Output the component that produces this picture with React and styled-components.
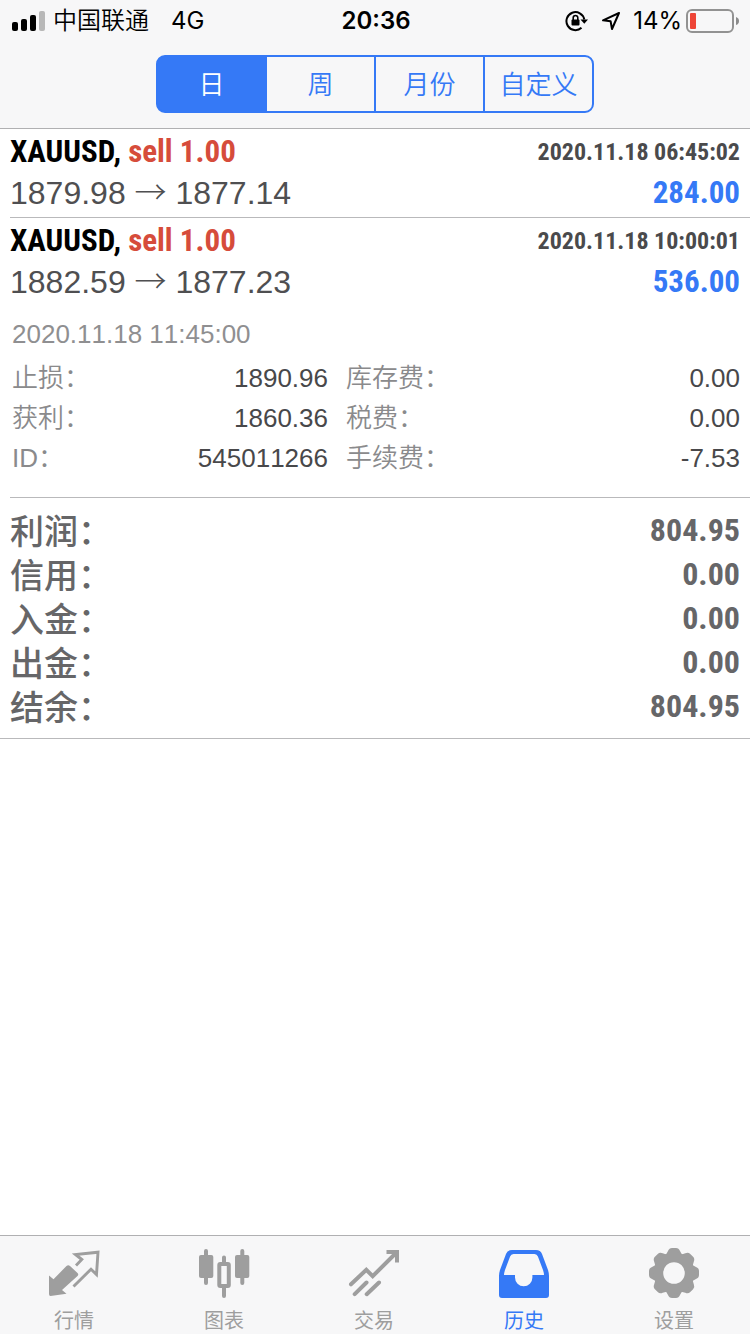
import React, { useState } from "react";
import styled, { createGlobalStyle } from "styled-components";

const blue = "#3579f6";
const gray = "#9e9e9e";
const line = "#b9b9bb";
const bar = "#f7f7f8";
const light = `"Liberation Sans", "Noto Sans CJK SC", sans-serif`;
const narrow = `"Roboto Condensed", "Liberation Sans", "Noto Sans CJK SC", sans-serif`;
const system = `Inter, "Noto Sans CJK SC", sans-serif`;

const GlobalStyle = createGlobalStyle`
  *, *::before, *::after { box-sizing: border-box; }
  body { margin: 0; background: #fff; }
`;

const Screen = styled.div`
  display: flex;
  flex-direction: column;
  min-height: 100vh;
  font-family: ${light};
`;

const Header = styled.header`
  background: ${bar};
  border-bottom: 1px solid #b0b0b2;
  padding-bottom: 15px;
`;

const StatusBar = styled.div`
  display: grid;
  grid-template-columns: 1fr auto 1fr;
  align-items: center;
  height: 40px;
  padding: 1px 10px 0 12px;
  font: 400 24px/40px ${system};
  color: #000;
`;

const StatusGroup = styled.div`
  display: flex;
  align-items: center;
  justify-content: ${(p) => (p.$end ? "flex-end" : "flex-start")};
  gap: 8px;
`;

const Carrier = styled.span`
  font-weight: 350;
  margin-right: 14px;
`;

const Percent = styled.span`
  margin: 0 -4px 0 4px;
`;

const LockIcon = styled.svg`
  margin-right: 4px;
`;

const Clock = styled.time`
  font-weight: 600;
`;

const Segments = styled.div`
  display: grid;
  grid-template-columns: repeat(4, 1fr);
  gap: 2px;
  width: 438px;
  max-width: 100%;
  height: 58px;
  margin: 15px auto 0;
  border: 2px solid ${blue};
  border-radius: 9px;
  background: ${blue};
  overflow: hidden;
`;

const Segment = styled.button`
  border: 0;
  padding: 2px 0 0;
  background: ${(p) => (p.$active ? blue : bar)};
  color: ${(p) => (p.$active ? "#fff" : blue)};
  font: 350 26px/52px ${light};
  cursor: pointer;
`;

const Content = styled.main`
  flex: 1;
`;

const Deal = styled.article`
  margin-left: 10px;
  padding: 1px 10px ${(p) => (p.$open ? "19px" : "5px")} 0;
  border-bottom: 1px solid ${line};
`;

const Line = styled.div`
  display: flex;
  justify-content: space-between;
  align-items: center;
  height: ${(p) => (p.$title ? "44px" : "38px")};
  white-space: nowrap;
`;

const Symbol = styled.h2`
  margin: 0;
  font: 700 31px/44px ${narrow};
  color: #000;
`;

const Side = styled.span`
  color: #d64c3b;
`;

const Stamp = styled.time`
  font: 700 24px/44px ${narrow};
  color: #4a4a4c;
`;

const Prices = styled.span`
  font: 400 32px/38px ${light};
  font-kerning: none;
  color: #4f4f51;
`;

const Arrow = styled.span`
  font-family: "Noto Sans CJK SC", sans-serif;
  font-weight: 300;
  line-height: 0;
`;

const Profit = styled.span`
  font: 700 31px/38px ${narrow};
  color: ${blue};
`;

const Opened = styled.time`
  display: block;
  margin: 13px 0 4px 2px;
  font: 400 26px/40px ${light};
  font-kerning: none;
  color: #8f8f91;
`;

const Details = styled.dl`
  display: grid;
  grid-template-columns: 316fr 394fr;
  column-gap: 18px;
  margin: 0 0 0 2px;
`;

const Detail = styled.div`
  display: flex;
  justify-content: space-between;
  font: 350 26px/40px ${light};
  font-kerning: none;
`;

const Term = styled.dt`
  color: #8a8a8c;
`;

const Value = styled.dd`
  margin: 0;
  color: #48484a;
`;

const Summary = styled.dl`
  margin: 0;
  padding: 10px;
  border-bottom: 1px solid ${line};
`;

const Total = styled.div`
  display: flex;
  justify-content: space-between;
  font: 500 34px/44px "Noto Sans CJK SC", sans-serif;
  color: #666668;
`;

const Sum = styled.dd`
  margin: 0;
  font: 700 32px/44px ${narrow};
`;

const TabBar = styled.nav`
  display: grid;
  grid-template-columns: repeat(5, 1fr);
  height: 99px;
  background: ${bar};
  border-top: 1px solid #b0b0b2;
`;

const Tab = styled.a`
  display: flex;
  flex-direction: column;
  align-items: center;
  gap: 8px;
  padding: 11px 2px 0 0;
  color: ${(p) => (p.$active ? blue : gray)};
  font: 400 20px/28px ${light};
  text-decoration: none;
`;

function Signal() {
  return (
    <svg width="33" height="20" viewBox="0 0 33 20" aria-hidden="true">
      <rect x="0" y="11" width="6" height="9" rx="2" />
      <rect x="9" y="8" width="6" height="12" rx="2" />
      <rect x="18" y="4" width="6" height="16" rx="2" />
      <rect x="27" y="0" width="6" height="20" rx="2" fill="#b8b8b8" />
    </svg>
  );
}

function RotationLock() {
  return (
    <LockIcon width="24" height="22" viewBox="0 0 24 22" fill="none" stroke="#000" aria-hidden="true">
      <path d="M19.300 9.500A9 9 0 1 0 16.500 17.800" strokeWidth="2" />
      <path d="M15.500 9.500h7.500l-3.700 4.300z" fill="#000" stroke="none" />
      <rect x="6.500" y="9.500" width="8" height="6" rx="1" fill="#000" stroke="none" />
      <path d="M8.200 10V7.800a2.300 2.300 0 0 1 4.600 0V10" strokeWidth="1.600" />
    </LockIcon>
  );
}

function Location() {
  return (
    <svg width="20" height="20" viewBox="0 0 20 20" fill="none" stroke="#000" strokeWidth="2" strokeLinejoin="round" aria-hidden="true">
      <path d="M18 2L2 9.300l7.600 1L11 18z" />
    </svg>
  );
}

function Battery() {
  return (
    <svg width="54" height="24" viewBox="0 0 54 24" aria-hidden="true">
      <rect x="1" y="1" width="46" height="22" rx="5" fill="none" stroke="#929292" strokeWidth="2" />
      <rect x="4" y="4" width="6" height="16" rx="1" fill="#ee4537" />
      <path d="M50 8q3 1 3 4t-3 4z" fill="#8b8b8b" />
    </svg>
  );
}

const teeth = [0, 45, 90, 135, 180, 225, 270, 315];

const icons = {
  quotes: (
    <>
      <path d="M1 28.500l4.500 3.700L18.500 19q1.800-1.500 3.500 0l7.500 7q1.500 1.500 0 3L14 43l4.500 3.700L2.500 49Q1 49 1 47z" fill="currentColor" />
      <path d="M28 18.500l5.800-6L27.500 7.500 50 5.200 48.500 27.500 43 22.200 25.500 39.500" fill="none" stroke="currentColor" strokeWidth="2.900" />
    </>
  ),
  chart: (
    <g fill="none" stroke="currentColor" strokeWidth="4">
      <path d="M8 4v32M44.300 4v32M26 10.500v6M26 40v9" strokeLinecap="round" />
      <rect x="1" y="8" width="14.300" height="23" rx="2" fill="currentColor" stroke="none" />
      <rect x="37" y="8" width="14.300" height="23" rx="2" fill="currentColor" stroke="none" />
      <rect x="21.300" y="17" width="9.500" height="22" rx="1" />
    </g>
  ),
  trade: (
    <g fill="none" stroke="currentColor" strokeWidth="4" strokeLinecap="round">
      <path d="M3 37.300L18.300 22.800 24.700 29.200 48 6M6.700 47.200L18.500 35.500M18.700 47.200L31 35.500" />
      <path d="M40.500 5H49v8.500" strokeLinecap="square" />
    </g>
  ),
  history: (
    <path
      fill="currentColor"
      fillRule="evenodd"
      d="M14 3h24q4.500 0 6 4l6 16q1 3 1 6v19q0 3-3 3H4q-3 0-3-3V29q0-3 1-6L8 7q1.500-4 6-4zM15.500 7q-2.500 0-3.400 2.500L7 23q-1 3-1 5h11v2.500a8.700 8.700 0 0 0 17.400 0V28H46q0-2-1-5L39.900 9.500Q39 7 36.500 7z"
    />
  ),
  settings: (
    <g transform="translate(26 26)">
      {teeth.map((angle) => (
        <path key={angle} transform={`rotate(${angle})`} fill="currentColor" d="M-9-17Q-7.500-19-6-22-4.800-25-2-25H2Q4.800-25 6-22 7.500-19 9-17z" />
      ))}
      <circle r="15.600" fill="none" stroke="currentColor" strokeWidth="9.600" />
    </g>
  ),
};

const periods = ["日", "周", "月份", "自定义"];

const deals = [
  { closed: "2020.11.18 06:45:02", from: "1879.98", to: "1877.14", profit: "284.00" },
  {
    closed: "2020.11.18 10:00:01",
    from: "1882.59",
    to: "1877.23",
    profit: "536.00",
    opened: "2020.11.18 11:45:00",
    details: [
      ["止损：", "1890.96"],
      ["库存费：", "0.00"],
      ["获利：", "1860.36"],
      ["税费：", "0.00"],
      ["ID：", "545011266"],
      ["手续费：", "-7.53"],
    ],
  },
];

const totals = [
  ["利润：", "804.95"],
  ["信用：", "0.00"],
  ["入金：", "0.00"],
  ["出金：", "0.00"],
  ["结余：", "804.95"],
];

const tabs = [
  ["quotes", "行情"],
  ["chart", "图表"],
  ["trade", "交易"],
  ["history", "历史"],
  ["settings", "设置"],
];

export default function App() {
  const [period, setPeriod] = useState("日");
  return (
    <Screen>
      <GlobalStyle />
      <Header>
        <StatusBar>
          <StatusGroup>
            <Signal />
            <Carrier>中国联通</Carrier>
            <span>4G</span>
          </StatusGroup>
          <Clock>20:36</Clock>
          <StatusGroup $end>
            <RotationLock />
            <Location />
            <Percent>14%</Percent>
            <Battery />
          </StatusGroup>
        </StatusBar>
        <Segments>
          {periods.map((name) => (
            <Segment
              key={name}
              type="button"
              $active={name === period}
              aria-pressed={name === period}
              onClick={() => setPeriod(name)}
            >
              {name}
            </Segment>
          ))}
        </Segments>
      </Header>
      <Content>
        {deals.map((deal) => (
          <Deal key={deal.closed} $open={Boolean(deal.details)}>
            <Line $title>
              <Symbol>
                XAUUSD, <Side>sell 1.00</Side>
              </Symbol>
              <Stamp>{deal.closed}</Stamp>
            </Line>
            <Line>
              <Prices>
                {deal.from} <Arrow>→</Arrow> {deal.to}
              </Prices>
              <Profit>{deal.profit}</Profit>
            </Line>
            {deal.details && (
              <>
                <Opened>{deal.opened}</Opened>
                <Details>
                  {deal.details.map(([term, value]) => (
                    <Detail key={term}>
                      <Term>{term}</Term>
                      <Value>{value}</Value>
                    </Detail>
                  ))}
                </Details>
              </>
            )}
          </Deal>
        ))}
        <Summary>
          {totals.map(([term, value]) => (
            <Total key={term}>
              <dt>{term}</dt>
              <Sum>{value}</Sum>
            </Total>
          ))}
        </Summary>
      </Content>
      <TabBar>
        {tabs.map(([icon, name]) => (
          <Tab key={icon} href={`#${icon}`} $active={icon === "history"}>
            <svg width="52" height="52" viewBox="0 0 52 52" aria-hidden="true">
              {icons[icon]}
            </svg>
            {name}
          </Tab>
        ))}
      </TabBar>
    </Screen>
  );
}
